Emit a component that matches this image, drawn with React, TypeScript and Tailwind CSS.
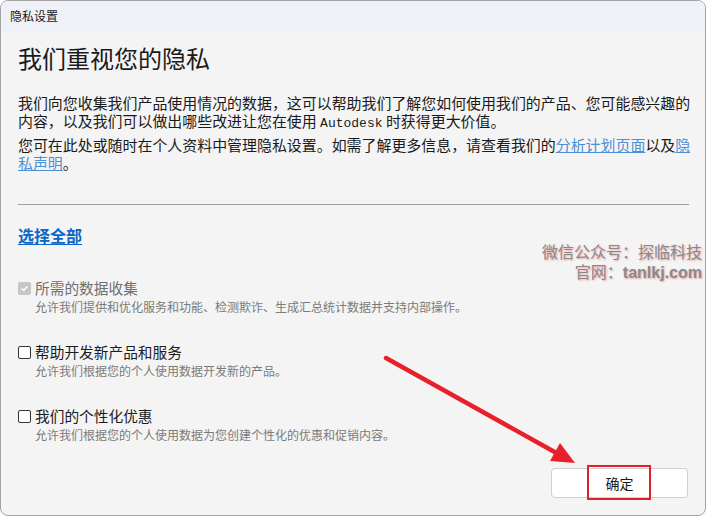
import React from "react";

const cjk = "font-['Noto_Sans_CJK_SC','Noto_Sans',sans-serif]";

function Check({ disabled }: { disabled?: boolean }) {
  if (disabled) {
    return (
      <span className="flex h-[13px] w-[13px] items-center justify-center rounded-[2px] bg-[#c6c6c6]">
        <svg width="9" height="9" viewBox="0 0 10 10" fill="none">
          <path d="M2 5.2 L4.1 7.2 L8 2.8" stroke="#ffffff" strokeWidth="1.4" strokeLinecap="round" strokeLinejoin="round" />
        </svg>
      </span>
    );
  }
  return <span className="h-[13px] w-[13px] rounded-[2px] border border-[#333333] bg-white" />;
}

function Option({ title, desc, disabled }: { title: string; desc: string; disabled?: boolean }) {
  return (
    <div>
      <div className="flex h-[20px] items-center">
        <div className="flex w-[17px] justify-start">
          <Check disabled={disabled} />
        </div>
        <span className={`text-[14.7px] leading-[20px] ${disabled ? "text-[#6f6f6f]" : "text-[#1b1b1b]"}`}>{title}</span>
      </div>
      <div className="pl-[17px] text-[12px] leading-[18px] text-[#7a7a7a]">{desc}</div>
    </div>
  );
}

export default function App() {
  return (
    <div className={`relative h-[516px] w-[706px] overflow-hidden ${cjk}`}>
      <div className="flex h-full w-full flex-col overflow-hidden rounded-[8px] border border-[#a3a3a3] bg-[#f4f4f4]">
        <div className="flex h-[30px] shrink-0 items-center bg-[#eef2f8] pl-[9px] text-[12px] text-[#1a1a1a]">
          隐私设置
        </div>

        <div className="flex flex-1 flex-col pl-[17px] pr-[17px]">
          <h1 className="mt-[11px] text-[24px] leading-[32px] font-normal text-[#1a1a1a]">我们重视您的隐私</h1>

          <p className="mt-[20px] whitespace-nowrap text-[14.95px] leading-[18px] text-[#1a1a1a]">
            我们向您收集我们产品使用情况的数据，这可以帮助我们了解您如何使用我们的产品、您可能感兴趣的
            <br />
            内容，以及我们可以做出哪些改进让您在使用 <span className="font-['Liberation_Mono',monospace] text-[13px] leading-none">Autodesk</span> 时获得更大价值。
          </p>

          <p className="mt-[6px] whitespace-nowrap text-[14.95px] leading-[18px] text-[#1a1a1a]">
            您可在此处或随时在个人资料中管理隐私设置。如需了解更多信息，请查看我们的
            <span className="text-[#4d8fd6] underline">分析计划页面</span>以及<span className="text-[#4d8fd6] underline">隐</span>
            <br />
            <span className="text-[#4d8fd6] underline">私声明</span>。
          </p>

          <div className="mt-[32px] h-px w-[671px] bg-[#a0a0a0]" />

          <div className="mt-[19px] h-[22px] text-[16px] leading-[22px] font-bold text-[#0a66c8] underline underline-offset-2">
            选择全部
          </div>

          <div className="mt-[32px] flex flex-col gap-[26px]">
            <Option disabled title="所需的数据收集" desc="允许我们提供和优化服务和功能、检测欺诈、生成汇总统计数据并支持内部操作。" />
            <Option title="帮助开发新产品和服务" desc="允许我们根据您的个人使用数据开发新的产品。" />
            <Option title="我们的个性化优惠" desc="允许我们根据您的个人使用数据为您创建个性化的优惠和促销内容。" />
          </div>

          <div className="mt-[24px] flex justify-end">
            <button className="relative flex h-[30px] w-[137px] items-center justify-center rounded-[4px] border border-[#cfcfcf] bg-white text-[14px] text-[#1a1a1a]">
              确定
              <span className="absolute left-[35px] top-[-4px] h-[35px] w-[64px] border-2 border-[#e0202a]" />
            </button>
          </div>
        </div>
      </div>

      <div className="absolute right-[4px] top-[241px] text-right text-[16px] leading-[20px] text-[#8a8a8a] [text-shadow:1px_1px_2px_rgba(230,90,100,0.55)]">
        <div>微信公众号：探临科技</div>
        <div>
          官网：<span className="font-['Liberation_Sans',sans-serif] font-bold">tanlkj.com</span>
        </div>
      </div>

      <svg className="pointer-events-none absolute left-0 top-0" width="706" height="516" viewBox="0 0 706 516">
        <line x1="386" y1="358" x2="560" y2="455" stroke="#e8202a" strokeWidth="4.5" strokeLinecap="round" />
        <polygon points="575,463 550,461 560,443" fill="#e8202a" />
      </svg>
    </div>
  );
}
